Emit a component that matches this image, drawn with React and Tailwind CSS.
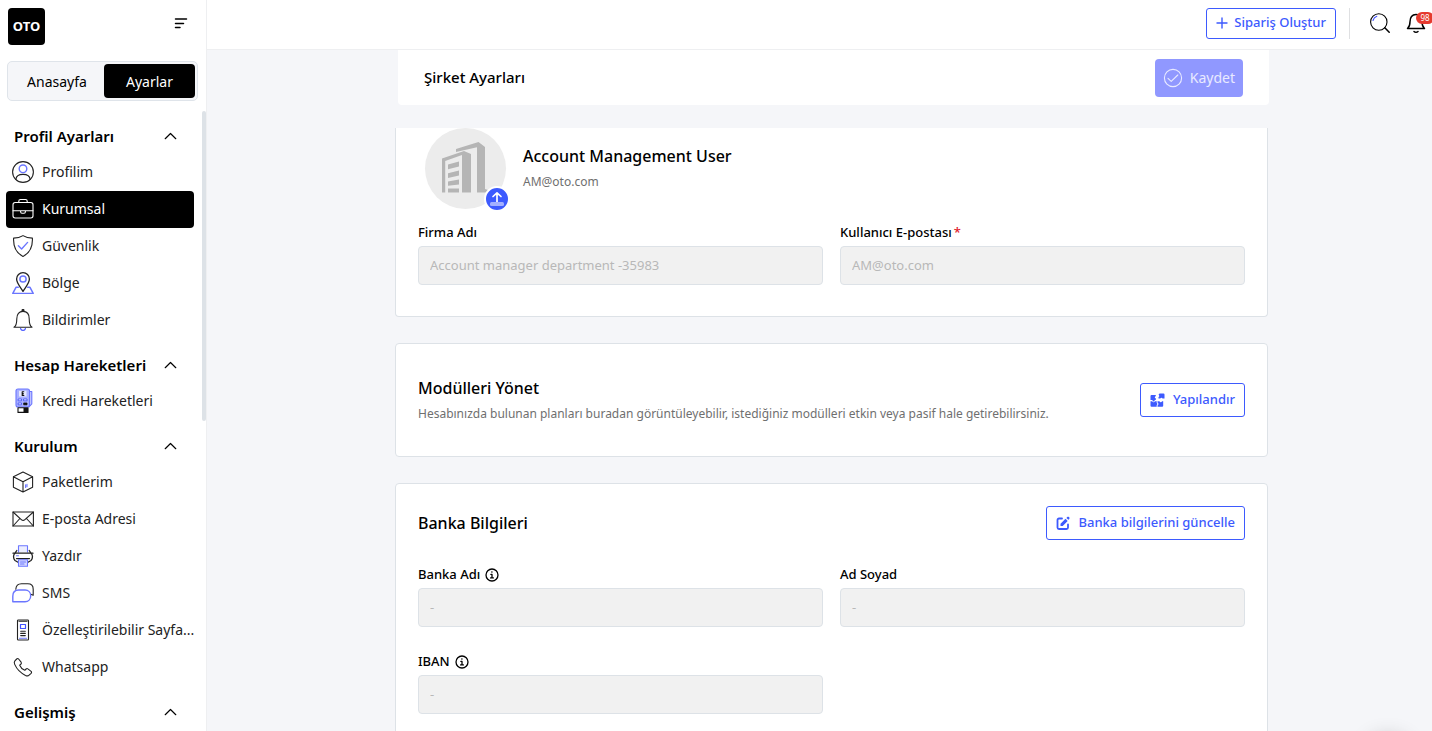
import { useState } from "react";

const BLUE = "#6b76ff";

// ── Icons ──────────────────────────────────────────────────────────────────

function Svg({ size = 22, box = 22, children, ...rest }) {
  return (
    <svg
      width={size}
      height={size}
      viewBox={`0 0 ${box} ${box}`}
      fill="none"
      stroke="currentColor"
      strokeWidth="1.1"
      strokeLinecap="round"
      strokeLinejoin="round"
      aria-hidden="true"
      className="shrink-0"
      {...rest}
    >
      {children}
    </svg>
  );
}

const UserIcon = () => (
  <Svg>
    <circle cx="11" cy="11" r="10.4" />
    <circle cx="11" cy="7.8" r="3.8" stroke={BLUE} strokeWidth="1.400" />
    <path d="M3.9 18.4c.3-3.400 3.200-5 7.100-5s6.800 1.600 7.100 5" />
  </Svg>
);

const BriefcaseIcon = () => (
  <Svg>
    <rect x="1" y="4.500" width="20" height="15.500" rx="2.200" />
    <path d="M6.800 4.500V3.200c0-1 .7-1.700 1.700-1.700h5c1 0 1.700.7 1.700 1.700v1.300M1 12.800h20M8.600 12.800v1c0 .9.600 1.500 1.400 1.500h2c.8 0 1.400-.6 1.400-1.500v-1" />
  </Svg>
);

const ShieldIcon = () => (
  <Svg>
    <path d="M11 .6c2.600 1.700 6 2.500 9.400 2.500.4 8.200-2.200 14.600-9.400 18.300C3.800 17.700 1.200 11.300 1.600 3.100 5 3.100 8.400 2.300 11 .6Z" />
    <path d="m6.400 10.800 3.200 3.200 6-6.600" stroke={BLUE} strokeWidth="1.400" />
  </Svg>
);

const RegionIcon = () => (
  <Svg>
    <path d="M6.300 15.300H4L.8 21.400h20.400L18 15.300h-2.300" stroke={BLUE} strokeWidth="1.500" />
    <path d="M11 19.400C9 15.700 4.600 11.500 4.600 7.100a6.400 6.400 0 0 1 12.800 0c0 4.400-4.400 8.600-6.400 12.300Z" strokeWidth="1.300" />
    <circle cx="11" cy="7" r="3.100" stroke={BLUE} strokeWidth="1.500" />
  </Svg>
);

const BellIcon = () => (
  <Svg>
    <circle cx="11" cy="1.400" r="1" fill="currentColor" />
    <path d="M2 18.300c2.300-1.500 2.800-4.500 2.800-8.600 0-4.400 2.200-7.300 6.200-7.300s6.200 2.900 6.200 7.300c0 4.100.5 7.100 2.800 8.600Z" />
    <path d="M8.600 19.600c.3 1.200 1.200 1.700 2.400 1.700s2.100-.5 2.400-1.700" stroke="#4353ff" strokeWidth="1.300" />
  </Svg>
);

const PosIcon = () => (
  <Svg size={25} box={25}>
    <path d="M18.500 3.500h2.300v12.300L18 19" stroke={BLUE} fill="#c5c9ff" />
    <rect x="5" y="1" width="13.500" height="18" rx="2" fill="#a9b0ff" stroke={BLUE} />
    <rect x="8" y="2.800" width="7.500" height="5.700" fill="#e6e8ff" stroke="none" />
    <path d="M12.800 3.800h-1.600v3.600h1.600M11.200 5.600h1.100" stroke="#111" />
    <path d="M7.500 11h3v1.800h-3zM13 11h3v1.800h-3zM7.500 15h3v1.800h-3z" fill="#fff" stroke="#4b58f5" strokeWidth=".9" />
    <path d="M13 15h3v1.800h-3z" fill="#111" stroke="#111" strokeWidth=".8" />
    <path d="M7 19.800h10v4.600H7z" fill="#fff" stroke="#111" />
    <path d="M12.500 20h4.500v4.400h-4.500z" fill="#111" stroke="none" />
  </Svg>
);

const BoxIcon = () => (
  <Svg>
    <path d="m11 1 9.600 4.700v10.600L11 21l-9.600-4.700V5.700L11 1ZM1.400 5.700 11 10.800l9.600-5.100M11 10.800V21" />
    <path d="M13.600 13.800v2.600M15 13.200v2.600" stroke={BLUE} />
  </Svg>
);

const MailIcon = () => (
  <Svg>
    <rect x="1" y="4" width="20.400" height="14" />
    <path d="m1 4 8.300 7.600c1 .9 2.600.9 3.600 0L21.400 4M1 18l6.900-7.500M21.400 18l-6.900-7.500" />
  </Svg>
);

const PrinterIcon = () => (
  <Svg>
    <path d="M6.500 7V.8h9V7" stroke={BLUE} fill="#eceeff" />
    <path d="M1 8.200h20M3.200 8.200C1 9.500 1 13.500 3 15.500l3 1.700M18.800 8.200c2.200 1.300 2.200 5.300.2 7.300l-3 1.700M4.800 5.500 3 8.200M17.200 5.500 19 8.200M4.500 13.600h13" strokeWidth="1.300" />
    <path d="M6.500 14.800h9v6.400h-9z" stroke={BLUE} fill="#d5d9ff" />
    <path d="M8.500 17h5M8.500 19h3.500M4.500 10.700h2" stroke={BLUE} />
  </Svg>
);

const ChatIcon = () => (
  <Svg>
    <path d="M3.800 7.300C4 3.800 6.200 1.800 9.500 1.800h6.300c3.400 0 5.400 2.300 5.400 5.400v6l-2.400-.9" />
    <path d="M.8 19.800v-5.600c0-3.800 2.300-6.200 5.900-6.200h6.400c3.300 0 5.600 2.400 5.600 5.800 0 3.500-2.300 6-5.700 6H.8Z" stroke={BLUE} strokeWidth="1.400" />
  </Svg>
);

const PageIcon = () => (
  <Svg>
    <rect x="5.500" y="1" width="11" height="20" rx=".8" />
    <path d="M7 2.200h8" />
    <path d="M8.500 5.500h5v4h-5z" stroke="#4353ff" strokeWidth="1.200" />
    <path d="M8.700 12.200h4.600M8.700 14.400h4.600M8.700 16.600h4.600" strokeWidth="1.100" />
    <path d="M7.500 19.300h7" stroke={BLUE} />
  </Svg>
);

const PhoneIcon = () => (
  <Svg>
    <path d="M4.700 3 2.900 4.800c-.8.900-.7 2.400-.2 3.600 2.200 5 5.600 8.400 10.800 11 1.300.6 2.700.7 3.600-.2l2-1.900c.6-.6.600-1.400 0-1.900l-3.200-2.500c-.6-.5-1.300-.4-1.800.1l-1.300 1.300c-2.200-.9-4.200-2.900-5.100-5.100L9 8c.5-.5.5-1.200.1-1.800L6.600 3c-.5-.6-1.300-.6-1.900 0Z" />
  </Svg>
);

const ChevronUp = () => (
  <Svg size={13} box={13} strokeWidth="1.200">
    <path d="M1.200 8.700 6.500 3.500l5.300 5.200" />
  </Svg>
);

const SearchIcon = () => (
  <Svg size={20} box={20}>
    <circle cx="8.800" cy="9" r="8.200" />
    <path d="m14.800 14.800 4.400 4.400" strokeWidth="1.500" />
    <path d="M3 7.500c.5-2 1.800-3.500 3.800-4.300" stroke="#4353ff" />
  </Svg>
);

const NotificationIcon = () => (
  <Svg size={20} box={20} strokeWidth="1.500">
    <path d="M1.500 15.500c2-1.700 2.500-3.500 2.500-6.800 0-4.400 2-7.200 6-7.200s6 2.800 6 7.200c0 3.300.5 5.100 2.500 6.800ZM8 18.500c1 1 3 1 4 0" />
  </Svg>
);

const CheckCircleIcon = () => (
  <Svg size={20} box={20}>
    <circle cx="10" cy="10" r="8.600" />
    <path d="m5 10.300 3.200 3 6.600-6.300" />
  </Svg>
);

const InfoIcon = () => (
  <Svg size={14} box={14} strokeWidth="1.300">
    <circle cx="7" cy="7" r="6" />
    <path d="M5.900 6.400H7v3.400M5.600 9.900h2.800" />
    <circle cx="6.900" cy="4" r=".8" fill="currentColor" stroke="none" />
  </Svg>
);

const ModulesIcon = () => (
  <Svg size={15} box={15} stroke="none" fill="currentColor">
    <path d="M1.500 2h4.300v1.300a1 1 0 1 0 0 2V7H4.600a1.100 1.100 0 1 1-2 0H.5V3a1 1 0 0 1 1-1Z" />
    <path d="M9.500.5h4a1 1 0 0 1 1 1v4h-2a1.200 1.200 0 0 0-2.200 0H8.500V4a1.200 1.200 0 0 0 0-2.200Z" />
    <path d="M.5 8.200h1.600a1.600 1.600 0 0 0 3 0h1.600v1.600a1.300 1.300 0 0 1 0 2.200v1.800H1.500a1 1 0 0 1-1-1Z" />
    <path d="M7.500 8.200h2a1.300 1.300 0 0 0 2.500 0h1.200v4.600a1 1 0 0 1-1 1H7.500v-1.200a1.700 1.700 0 0 0 0-3Z" />
  </Svg>
);

const EditIcon = () => (
  <Svg size={14} box={14} strokeWidth="1.800">
    <path d="M6 2.500H3A1.500 1.500 0 0 0 1.500 4v7.500A1.500 1.500 0 0 0 3 13h7.500a1.500 1.500 0 0 0 1.500-1.500V8.500" />
    <path d="M4.500 10V7.800l5-5 2.200 2.200-5 5ZM10.400 1.900l.9-.9c.5-.5 1.100-.5 1.600 0l.3.300c.5.500.5 1.100 0 1.600l-.8.900Z" fill="currentColor" stroke="none" />
  </Svg>
);

const BuildingIcon = () => (
  <svg width="46" height="51" viewBox="0 0 46 51" fill="#b5b5b5" aria-hidden="true">
    <path d="M0 16.500 22 9l7 3v38.500h-9V13L3.200 19v31.500H0Z" />
    <path d="M14 7 36.500 0 43 5v42l3 1v2.500H35V5.200L14 10Z" />
    <path d="m6 22.500 11-3v5l-11 2.800ZM6 31.200l11-2.700v5L6 36ZM6 39.500l11-2v5l-11 1.200ZM6 46.500h11v4H6Z" />
  </svg>
);

// ── Sidebar ────────────────────────────────────────────────────────────────

const SECTIONS = [
  {
    title: "Profil Ayarları",
    items: [
      { label: "Profilim", icon: UserIcon },
      { label: "Kurumsal", icon: BriefcaseIcon },
      { label: "Güvenlik", icon: ShieldIcon },
      { label: "Bölge", icon: RegionIcon },
      { label: "Bildirimler", icon: BellIcon },
    ],
  },
  {
    title: "Hesap Hareketleri",
    items: [{ label: "Kredi Hareketleri", icon: PosIcon }],
  },
  {
    title: "Kurulum",
    items: [
      { label: "Paketlerim", icon: BoxIcon },
      { label: "E-posta Adresi", icon: MailIcon },
      { label: "Yazdır", icon: PrinterIcon },
      { label: "SMS", icon: ChatIcon },
      { label: "Özelleştirilebilir Sayfa...", icon: PageIcon },
      { label: "Whatsapp", icon: PhoneIcon },
    ],
  },
  { title: "Gelişmiş", items: [] },
];

function Sidebar() {
  const [active, setActive] = useState("Kurumsal");

  return (
    <aside className="flex w-[207px] shrink-0 flex-col border-r border-[#eeeff1] bg-white">
      <div className="flex items-start justify-between pt-2 pr-[18px] pl-2">
        <a href="#" className="flex size-[37px] items-center justify-center rounded-sm bg-black text-[13px] font-bold text-white">
          OTO
        </a>
        <button type="button" aria-label="Menü" className="pt-2">
          <Svg size={14} box={14} strokeWidth="1.500">
            <path d="M1.500 3h11M1.500 7.500h8M1.500 11.500h4.500" />
          </Svg>
        </button>
      </div>

      <div className="mr-2 ml-[7px] mt-4 flex h-10 rounded-[5px] border border-[#dfe4ea] bg-[#f5f6f9] p-[2px] text-[14px]">
        <button type="button" className="flex-1">Anasayfa</button>
        <button type="button" className="w-[91px] rounded-sm bg-black text-white">Ayarlar</button>
      </div>

      <div className="relative mt-[10px] min-h-0 flex-1">
        <nav className="flex h-full flex-col gap-[10px] overflow-hidden pt-[9px] pr-3 pl-[6px]">
          {SECTIONS.map((section) => (
            <section key={section.title}>
              <button type="button" className="flex h-[34px] w-full items-center justify-between pr-[17px] pb-[2px] pl-2 text-[15px] font-semibold">
                {section.title}
                <ChevronUp />
              </button>
              {section.items.map(({ label, icon: Icon }) => (
                <a
                  key={label}
                  href="#"
                  onClick={() => setActive(label)}
                  className={`flex h-[37px] items-center gap-2 rounded-sm pb-[2px] pl-[6px] text-[14px] whitespace-nowrap ${
                    active === label ? "bg-black text-white" : "text-[#222]"
                  }`}
                >
                  <span className="flex w-[22px] shrink-0 justify-center">
                    <Icon />
                  </span>
                  {label}
                </a>
              ))}
            </section>
          ))}
        </nav>
        <div className="absolute top-0 right-0 h-1/2 w-1 rounded-sm bg-[#dde2e7]" />
      </div>
    </aside>
  );
}

// ── Shared parts ───────────────────────────────────────────────────────────

function OutlineButton({ icon, children, className = "h-[34px] gap-2" }) {
  return (
    <button
      type="button"
      className={`flex shrink-0 items-center rounded-[3px] border border-[#3d5afe] bg-white px-[9px] text-[13px] font-medium text-[#3d5afe] ${className}`}
    >
      {icon}
      {children}
    </button>
  );
}

function Field({ id, label, value, required, info }) {
  return (
    <div>
      <label htmlFor={id} className="flex h-[27px] items-center gap-[5px] text-[13px] font-medium">
        <span>
          {label}
          {required && <span className="ml-[2px] text-[#e0202c]">*</span>}
        </span>
        {info && <InfoIcon />}
      </label>
      <input
        id={id}
        disabled
        defaultValue={value}
        className="h-[39px] w-full rounded-sm border border-[#dde2e7] bg-[#f1f1f1] px-[11px] pb-[2px] text-[13px] text-[#b8b8b8]"
      />
    </div>
  );
}

// ── Page ───────────────────────────────────────────────────────────────────

export default function App() {
  return (
    <div className="flex h-screen overflow-hidden bg-[#f5f6f9] font-['Noto_Sans',sans-serif] text-black">
      <Sidebar />

      <div className="flex min-w-0 flex-1 flex-col">
        <header className="flex h-[50px] shrink-0 items-center justify-end border-b border-[#eeeff1] bg-white pr-[6px] pb-[3px]">
          <OutlineButton
            className="h-[31px] gap-[6px]"
            icon={
              <Svg size={12} box={12} strokeWidth="1.400">
                <path d="M6 1v10M1 6h10" />
              </Svg>
            }
          >
            Sipariş Oluştur
          </OutlineButton>
          <div className="ml-[13px] h-[31px] w-px bg-[#dfe0e2]" />
          <button type="button" aria-label="Ara" className="ml-5">
            <SearchIcon />
          </button>
          <button type="button" aria-label="Bildirimler" className="relative ml-4">
            <NotificationIcon />
            <span className="absolute -top-[1px] left-[10px] flex h-3 w-[18px] items-center justify-center rounded-md bg-[#e53a2f] text-[8px] text-white">
              98
            </span>
          </button>
        </header>

        <main className="flex min-h-0 flex-1 flex-col pl-6">
          <div className="mx-auto flex min-h-0 w-full max-w-[873px] flex-1 flex-col">
            <div className="-mr-px ml-[3px] flex h-[55px] shrink-0 items-center justify-between rounded-b-sm bg-white pr-[26px] pl-[26px]">
              <h1 className="text-[15px] font-medium">Şirket Ayarları</h1>
              <button
                type="button"
                disabled
                className="flex h-[38px] items-center gap-[7px] rounded-sm bg-[#9098ff] px-2 text-[14px] text-white/80"
              >
                <CheckCircleIcon />
                Kaydet
              </button>
            </div>

            <div className="mt-[23px] flex min-h-0 flex-1 flex-col gap-[26px] overflow-hidden">
              <section className="shrink-0 rounded-b-sm border border-t-0 border-[#dde2e7] bg-white px-[22px] pb-[31px]">
                <div className="flex h-[91px] gap-[17px] pl-[7px]">
                  <div className="relative flex size-[81px] shrink-0 items-center justify-center rounded-full bg-[#ececec] pr-[2px] pb-[3px]">
                    <BuildingIcon />
                    <button
                      type="button"
                      aria-label="Logo yükle"
                      className="absolute -right-[4px] -bottom-[3px] flex size-[26px] items-center justify-center rounded-full border-2 border-white bg-[#3d5afe] text-white"
                    >
                      <Svg size={16} box={16} strokeWidth="1.700">
                        <path d="M8 11V2M4 5.500 8 1.800l4 3.700" />
                        <rect x="1" y="11" width="14" height="4" rx="1.500" fill="#a3b0ff" stroke="none" />
                      </Svg>
                    </button>
                  </div>
                  <div className="pt-4">
                    <h2 className="text-[16px] leading-6 font-medium">Account Management User</h2>
                    <p className="mt-1 text-[12px] leading-5 text-[#6f6f6f]">AM@oto.com</p>
                  </div>
                </div>
                <div className="grid grid-cols-2 gap-x-[17px]">
                  <Field id="company" label="Firma Adı" value="Account manager department -35983" />
                  <Field id="email" label="Kullanıcı E-postası" value="AM@oto.com" required />
                </div>
              </section>

              <section className="flex h-[114px] shrink-0 items-center justify-between gap-4 rounded-sm border border-[#dde2e7] bg-white px-[22px]">
                <div>
                  <h2 className="text-[16px] leading-6 font-medium">Modülleri Yönet</h2>
                  <p className="mt-1 text-[12px] leading-5 text-[#6f6f6f]">
                    Hesabınızda bulunan planları buradan görüntüleyebilir, istediğiniz modülleri etkin veya pasif hale getirebilirsiniz.
                  </p>
                </div>
                <OutlineButton icon={<ModulesIcon />}>Yapılandır</OutlineButton>
              </section>

              <section className="shrink-0 rounded-sm border border-[#dde2e7] bg-white px-[22px] pt-[22px] pb-10">
                <div className="mb-[21px] flex items-center justify-between">
                  <h2 className="text-[16px] leading-6 font-medium">Banka Bilgileri</h2>
                  <OutlineButton icon={<EditIcon />}>Banka bilgilerini güncelle</OutlineButton>
                </div>
                <div className="grid grid-cols-2 gap-x-[17px] gap-y-[21px]">
                  <Field id="bank" label="Banka Adı" value="-" info />
                  <Field id="owner" label="Ad Soyad" value="-" />
                  <Field id="iban" label="IBAN" value="-" info />
                </div>
              </section>
            </div>
          </div>
        </main>
      </div>

      <div className="fixed right-6 -bottom-12 h-10 w-10 rounded-full shadow-[0_0_22px_rgba(0,0,0,0.3)]" />
    </div>
  );
}
